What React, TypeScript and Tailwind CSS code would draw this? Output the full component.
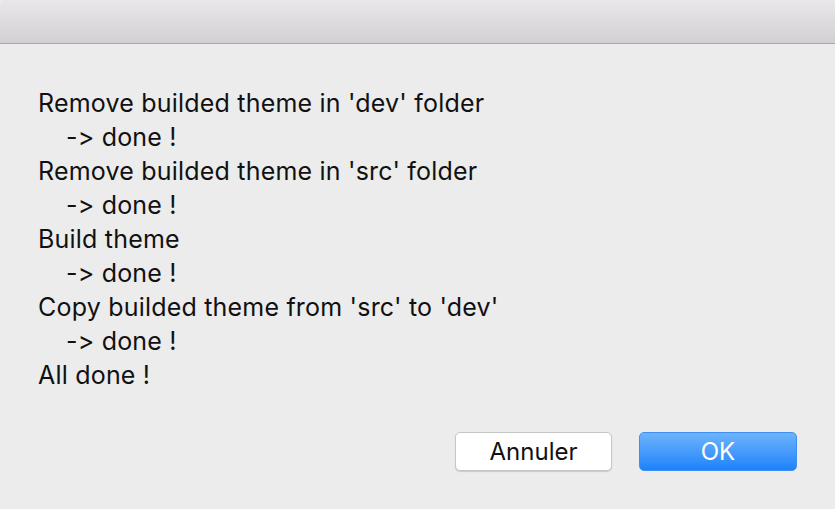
import React from "react";

const lines: { text: string; indent?: boolean }[] = [
  { text: "Remove builded theme in 'dev' folder" },
  { text: "-> done !", indent: true },
  { text: "Remove builded theme in 'src' folder" },
  { text: "-> done !", indent: true },
  { text: "Build theme" },
  { text: "-> done !", indent: true },
  { text: "Copy builded theme from 'src' to 'dev'" },
  { text: "-> done !", indent: true },
  { text: "All done !" },
];

export default function App() {
  return (
    <div
      className="w-[835px] h-[509px] flex flex-col bg-[#ececec] overflow-hidden [font-feature-settings:'calt'_0,'liga'_0]"
      style={{ fontFamily: "Inter, 'Liberation Sans', Arial, sans-serif" }}
    >
      <div className="h-[44px] shrink-0 bg-gradient-to-b from-[#e9e7e9] to-[#d2d0d2] border-b border-[#a9a9a9] rounded-t-[5px]" />
      <div className="flex-1 flex flex-col pl-[38px] pr-[38px] pt-[42px]">
        <div className="flex flex-col text-[25px] leading-[34px] tracking-[0.2px] text-[#111]">
          {lines.map((l, i) => (
            <div key={i} className={l.indent ? "pl-[28px]" : ""}>
              {l.text}
            </div>
          ))}
        </div>
        <div className="flex justify-end gap-[27px] mt-[40px]">
          <button className="w-[157px] h-[39px] bg-white rounded-[5px] border border-[#c6c6c6] shadow-[0_1px_1px_rgba(0,0,0,0.15)] text-[24px] text-[#111]">
            Annuler
          </button>
          <button className="w-[158px] h-[39px] rounded-[5px] bg-gradient-to-b from-[#6cb3fa] to-[#1a82fb] border border-[#3d8ff5] text-[24px] text-white">
            OK
          </button>
        </div>
      </div>
    </div>
  );
}
